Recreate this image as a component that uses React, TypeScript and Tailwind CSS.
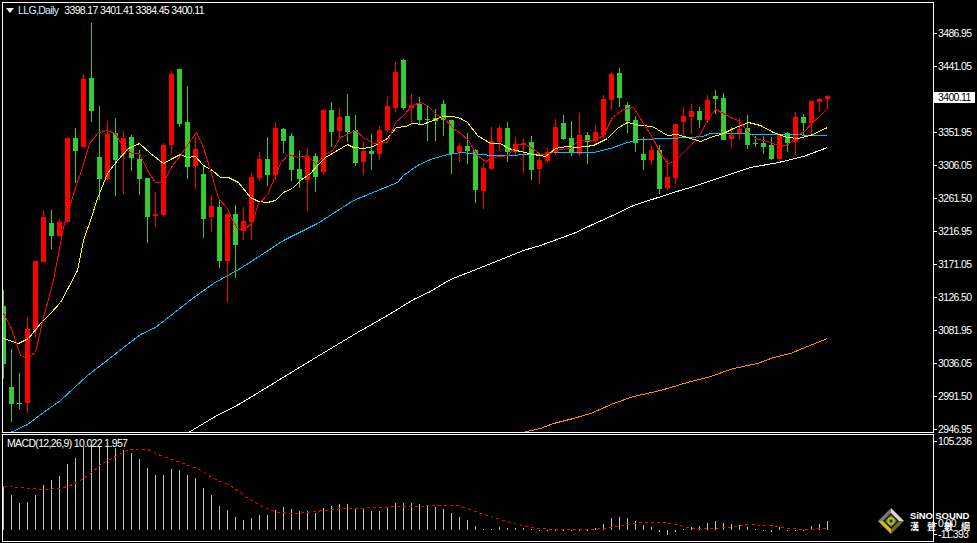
type Candle = [number, number, number, number, number];
type Pt = [number, number];

// hi, body top, body bottom, lo, 1 = red / 0 = green
const candles: Candle[] = [
  [290, 306, 364, 379, 0], [349, 387, 404, 422, 0], [373, 403, 404, 409, 0], [317, 329, 403, 413, 1],
  [261, 261, 330, 338, 1], [210, 217, 262, 262, 1], [210, 223, 236, 249, 0], [219, 222, 236, 236, 1],
  [138, 138, 222, 222, 1], [128, 138, 151, 183, 0], [74, 79, 147, 147, 1], [23, 78, 111, 122, 0],
  [106, 157, 179, 200, 0], [121, 134, 179, 180, 1], [118, 133, 160, 196, 0], [131, 138, 154, 194, 1],
  [135, 137, 158, 171, 0], [150, 159, 179, 195, 0], [178, 178, 217, 243, 0], [192, 214, 216, 227, 1],
  [143, 145, 215, 217, 1], [71, 74, 145, 154, 1], [69, 69, 124, 127, 0], [86, 122, 167, 179, 0],
  [137, 149, 166, 189, 1], [165, 174, 219, 238, 0], [195, 206, 217, 232, 1], [200, 207, 261, 268, 0],
  [213, 214, 261, 302, 1], [205, 214, 245, 278, 0], [207, 221, 231, 240, 1], [173, 177, 222, 240, 1],
  [152, 159, 178, 181, 1], [137, 159, 175, 186, 0], [122, 128, 175, 180, 1], [128, 129, 141, 153, 0],
  [133, 136, 170, 181, 0], [151, 169, 179, 188, 0], [148, 157, 180, 211, 1], [153, 156, 177, 192, 0],
  [109, 110, 172, 175, 1], [102, 110, 132, 147, 0], [108, 117, 131, 140, 1], [94, 116, 132, 142, 0],
  [115, 130, 163, 166, 0], [142, 151, 162, 175, 1], [134, 151, 154, 170, 0], [126, 130, 154, 160, 1],
  [97, 106, 130, 132, 1], [62, 72, 108, 112, 1], [59, 60, 108, 110, 0], [94, 105, 108, 122, 1],
  [97, 104, 120, 124, 0], [106, 119, 120, 141, 0], [109, 118, 121, 141, 0], [100, 104, 120, 136, 0],
  [120, 120, 154, 174, 0], [143, 146, 152, 162, 1], [133, 146, 151, 164, 0], [149, 150, 190, 203, 0],
  [163, 168, 191, 209, 1], [127, 141, 169, 169, 1], [126, 128, 142, 151, 1], [122, 128, 152, 162, 0],
  [137, 144, 152, 156, 1], [139, 143, 145, 173, 1], [136, 142, 170, 180, 0], [157, 160, 169, 184, 1],
  [148, 152, 161, 163, 1], [119, 127, 152, 155, 1], [115, 123, 139, 140, 0], [121, 138, 153, 156, 0],
  [113, 135, 154, 156, 1], [132, 135, 142, 164, 0], [125, 132, 141, 144, 1], [95, 99, 135, 138, 1],
  [72, 74, 100, 110, 1], [68, 73, 98, 107, 0], [102, 105, 121, 133, 0], [116, 120, 143, 152, 0],
  [137, 154, 160, 170, 0], [145, 150, 160, 165, 1], [145, 150, 189, 194, 0], [159, 177, 188, 190, 1],
  [124, 124, 178, 184, 1], [107, 116, 122, 137, 1], [104, 111, 117, 134, 1], [107, 111, 120, 128, 0],
  [95, 100, 120, 123, 1], [90, 96, 99, 114, 0], [93, 98, 140, 140, 0], [127, 135, 139, 148, 1],
  [118, 129, 134, 140, 1], [115, 128, 145, 149, 0], [136, 143, 144, 147, 0], [136, 143, 147, 154, 0],
  [137, 145, 159, 160, 0], [134, 135, 159, 161, 1], [132, 133, 143, 152, 0], [112, 117, 142, 155, 1],
  [114, 117, 123, 135, 0], [101, 101, 123, 134, 1], [98, 99, 102, 112, 1], [95, 96, 99, 108, 1],
];

const redLine: Pt[] = [
  [3, 313], [11, 328], [20, 355], [27, 358], [35, 352], [43, 317], [53, 280], [63, 227], [69, 207], [75, 187],
  [82, 167], [89, 143], [98, 132], [107, 130], [115, 133], [123, 147], [131, 153], [139, 153], [148, 172],
  [155, 182], [163, 182], [172, 165], [180, 155], [188, 143], [196, 132], [203, 147], [210, 170], [218, 198],
  [227, 208], [232, 220], [237, 228], [243, 230], [252, 222], [258, 203], [267, 195], [273, 180], [280, 163],
  [288, 154], [298, 157], [307, 155], [316, 164], [323, 155], [332, 150], [340, 137], [355, 130], [363, 137],
  [373, 143], [387, 142], [395, 122], [403, 115], [412, 105], [420, 102], [427, 105], [437, 115], [443, 117],
  [453, 128], [460, 133], [468, 140], [477, 155], [485, 161], [493, 157], [508, 155], [515, 145], [523, 143],
  [532, 148], [540, 154], [550, 153], [560, 149], [570, 148], [578, 140], [593, 140], [603, 135], [612, 117],
  [623, 109], [633, 107], [643, 123], [652, 137], [660, 153], [667, 163], [673, 162], [678, 157], [690, 145],
  [698, 137], [707, 120], [715, 109], [723, 113], [732, 118], [738, 120], [747, 130], [755, 138], [770, 142],
  [780, 146], [788, 144], [797, 135], [805, 130], [812, 122], [820, 115], [827, 108],
];

const yellowLine: Pt[] = [
  [3, 338], [12, 341], [18, 343], [28, 338], [40, 323], [50, 313], [60, 302], [68, 287], [77, 270], [83, 240],
  [91, 217], [97, 198], [107, 173], [117, 160], [128, 148], [139, 143], [150, 153], [163, 163], [172, 158],
  [180, 154], [187, 157], [195, 156], [203, 165], [212, 170], [220, 177], [228, 177], [238, 182], [250, 197],
  [258, 201], [267, 202], [275, 200], [283, 192], [292, 188], [300, 180], [310, 173], [317, 165], [325, 157],
  [337, 150], [347, 144], [353, 147], [363, 148], [373, 146], [387, 138], [396, 127], [405, 126], [412, 123],
  [422, 124], [433, 120], [442, 116], [453, 116], [460, 118], [467, 122], [477, 135], [490, 143], [500, 143],
  [508, 148], [520, 151], [533, 154], [545, 156], [555, 148], [567, 146], [577, 147], [593, 145], [607, 138],
  [617, 128], [627, 122], [640, 125], [652, 126], [667, 135], [677, 134], [690, 138], [700, 141], [710, 137],
  [723, 133], [733, 128], [748, 122], [760, 125], [773, 132], [787, 137], [797, 138], [810, 135], [827, 127],
];

const blueLine: Pt[] = [
  [10, 432], [27, 424], [43, 412], [60, 400], [87, 375], [113, 355], [127, 344], [140, 334], [155, 327],
  [192, 298], [213, 283], [240, 268], [283, 240], [317, 223], [353, 200], [370, 193], [397, 182], [403, 175],
  [417, 165], [430, 159], [443, 155], [460, 152], [480, 154], [493, 155], [543, 154], [550, 152], [593, 152],
  [610, 148], [627, 142], [640, 139], [690, 137], [702, 136], [710, 133], [723, 133], [827, 135],
];

const whiteLine: Pt[] = [
  [188, 432], [213, 417], [240, 403], [312, 359], [337, 344], [357, 332], [387, 315], [413, 299], [430, 291],
  [450, 279], [473, 270], [503, 258], [523, 250], [540, 245], [573, 233], [590, 225], [610, 216], [633, 205],
  [673, 192], [690, 187], [717, 178], [750, 167], [778, 162], [803, 156], [827, 147],
];

const orangeLine: Pt[] = [
  [522, 432], [540, 428], [553, 423], [573, 418], [590, 413], [613, 403], [633, 396], [660, 390], [687, 382],
  [710, 376], [733, 368], [757, 363], [773, 357], [790, 353], [807, 346], [827, 338],
];

// top of each MACD bar, 530 is the zero line
const macdBars = [
  486, 495, 503, 502, 495, 485, 480, 476, 464, 458, 447, 445, 447, 447, 448, 450, 453, 459, 468, 475, 475, 469, 470,
  475, 478, 488, 495, 506, 510, 517, 520, 518, 515, 515, 510, 507, 509, 511, 511, 513, 508, 506, 504, 504, 508, 509,
  511, 511, 508, 503, 503, 503, 504, 506, 507, 509, 513, 517, 520, 526, 529, 529, 527, 528, 528, 528, 529, 531, 531,
  530, 530, 530, 530, 530, 528, 524, 518, 517, 518, 521, 525, 527, 532, 535, 532, 529, 527, 526, 523, 521, 523, 524,
  525, 527, 529, 530, 532, 527, 531, 530, 530, 526, 524, 521,
];

const signalLine: Pt[] = [
  [3, 486], [20, 487], [43, 489], [60, 488], [70, 485], [80, 480], [90, 473], [100, 464], [113, 457], [128, 449],
  [147, 449], [160, 455], [177, 461], [197, 468], [213, 478], [230, 485], [245, 496], [263, 507], [277, 512],
  [293, 513], [310, 512], [322, 510], [335, 509], [340, 508], [387, 507], [395, 506], [420, 506], [427, 505],
  [457, 505], [467, 508], [480, 513], [497, 518], [513, 523], [533, 527], [540, 528], [553, 529], [593, 529],
  [603, 528], [617, 526], [633, 523], [640, 522], [663, 522], [677, 524], [690, 528], [707, 528], [730, 527],
  [747, 524], [770, 525], [787, 528], [807, 529], [827, 528],
];

const priceLabels = [
  "3486.95", "3441.05", "3396.50", "3351.95", "3306.05", "3261.50", "3216.95", "3171.05", "3126.50", "3081.95",
  "3036.05", "2991.50",
];

const pts = (line: Pt[]) => line.map(([x, y]) => `${x + 0.5},${y + 0.5}`).join(" ");

function Trace({ line, color, dash }: { line: Pt[]; color: string; dash?: string }) {
  return <polyline points={pts(line)} fill="none" stroke={color} strokeWidth={1} strokeDasharray={dash} />;
}

function AxisLabel({ text, className }: { text: string; className: string }) {
  return (
    <div className={`flex items-center ${className}`}>
      <div className="flex h-[11px] items-center">
        <span className="h-px w-[3px] bg-white" />
        <span className="ml-px text-white">{text}</span>
      </div>
    </div>
  );
}

function Logo() {
  return (
    <div className="absolute left-[877px] top-[507px] flex items-center gap-[5px]">
      <svg width="28" height="28" viewBox="0 0 28 28" shapeRendering="geometricPrecision">
        <polygon points="14,1 1,14 8,14 14,8" fill="#77776f" />
        <polygon points="14,1 27,14 20,14 14,8" fill="#d9d9d2" />
        <polygon points="1,14 14,27 14,20 8,14" fill="#d8b92a" />
        <polygon points="27,14 14,27 14,20 20,14" fill="#6f6a34" />
        <polygon points="14,6 22,14 14,22 6,14" fill="#1a1a0c" />
        <polygon points="14,8 20,14 14,20 8,14" fill="#7d7d1e" />
        <circle cx="14" cy="14" r="3" fill="none" stroke="#a5cf35" strokeWidth="1.4" />
        <circle cx="14" cy="14" r="1" fill="#10140a" />
      </svg>
      <div className="flex w-[60px] flex-col text-white">
        <span className="whitespace-nowrap text-[9.5px] leading-[10px] font-bold font-['Liberation_Sans',sans-serif] tracking-[-0.1px]">
          SiNO SOUND
        </span>
        <span className="mt-[1px] flex justify-between tracking-normal text-[9px] leading-[10px] font-bold font-['Noto_Sans_CJK_TC','Noto_Sans_CJK_SC',sans-serif]">
          <span>漢</span>
          <span>聲</span>
          <span>數</span>
          <span>網</span>
        </span>
      </div>
    </div>
  );
}

export default function App() {
  return (
    <div className="relative flex h-[543px] w-[977px] overflow-hidden bg-black text-[10.5px] leading-[11px] tracking-[-0.65px] font-['Liberation_Sans',Arial,sans-serif]">
      <div className="flex w-[934px] flex-col gap-px pl-[2px] pt-[2px]">
        {/* price window */}
        <div className="relative h-[431px] w-[932px] border border-white">
          <svg width="930" height="429" viewBox="3 3 930 429" shapeRendering="crispEdges" className="block">
            {candles.map(([hi, top, bottom, lo, up], i) => {
              const cx = 3 + 8 * i;
              const color = up ? "#ff0000" : "#32cd32";
              return (
                <g key={i} fill={color}>
                  <rect x={cx} y={hi} width={1} height={Math.max(lo - hi, 1)} />
                  <rect x={cx - 2} y={top} width={5} height={Math.max(bottom - top, 1)} />
                </g>
              );
            })}
            <Trace line={orangeLine} color="#ff8c00" />
            <Trace line={whiteLine} color="#ffffff" />
            <Trace line={blueLine} color="#00bfff" />
            <Trace line={yellowLine} color="#ffff00" />
            <Trace line={redLine} color="#ff0000" />
          </svg>
          <div className="absolute left-[3px] top-[2px] flex h-[11px] items-center whitespace-nowrap text-white">
            <svg width="8" height="5" viewBox="0 0 8 5" className="mr-[4px]">
              <polygon points="0,0 8,0 4,5" fill="#ffffff" />
            </svg>
            <span className="mr-[6px] text-[#d8ecff]">LLG,Daily</span>
            <span>3398.17 3401.41 3384.45 3400.11</span>
          </div>
        </div>
        {/* MACD window */}
        <div className="relative h-[108px] w-[932px] border border-white">
          <svg width="930" height="106" viewBox="3 435 930 106" shapeRendering="crispEdges" className="block">
            {macdBars.map((top, i) => (
              <rect
                key={i}
                x={3 + 8 * i}
                y={Math.min(top, 530)}
                width={1}
                height={Math.max(Math.abs(530 - top), 1)}
                fill="#c0c0c0"
              />
            ))}
            <Trace line={signalLine} color="#ff0000" dash="3 3" />
          </svg>
          <div className="absolute left-[4px] top-[3px] h-[11px] whitespace-nowrap text-white">
            MACD(12,26,9) 10.022 1.957
          </div>
        </div>
      </div>

      {/* value scale */}
      <div className="relative flex w-[43px] flex-col pt-[28px]">
        {priceLabels.map((p) => (
          <AxisLabel key={p} text={p} className="h-[33px] items-start" />
        ))}
        <AxisLabel text="2946.95" className="h-[11px] items-start" />
        <AxisLabel text="105.236" className="mt-px h-[82px] items-start" />
        <AxisLabel text="0.00" className="h-[11px] items-start" />
        <AxisLabel text="-11.393" className="h-[11px] items-start" />
        <div className="absolute left-0 top-[92px] flex h-[11px] w-[41px] items-center bg-white pl-[4px] text-black">
          3400.11
        </div>
      </div>

      <Logo />
    </div>
  );
}
